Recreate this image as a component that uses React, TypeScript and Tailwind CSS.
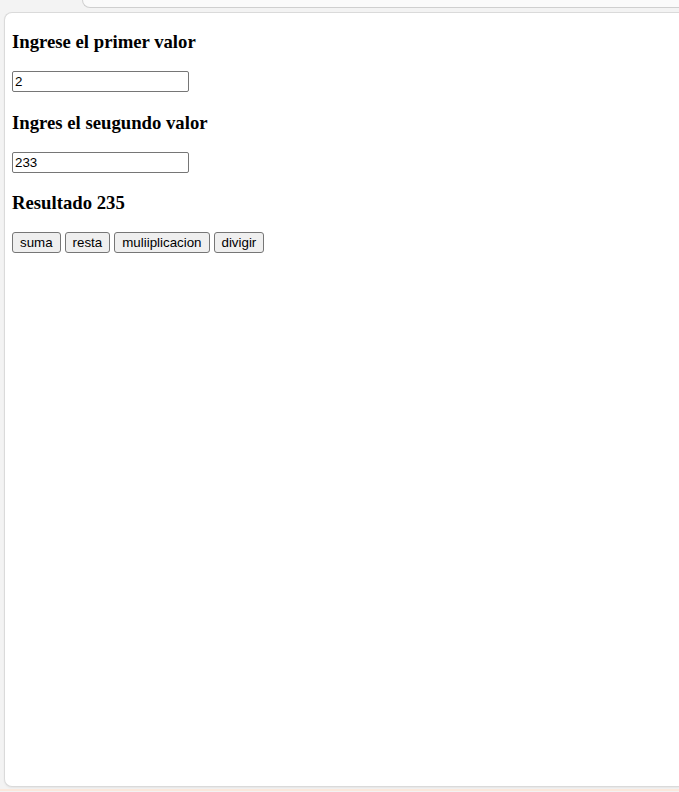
export default function App() {
    return (
        <div className="w-[679px] h-[792px] bg-[#f3f3f3] overflow-hidden flex flex-col">
            <div className="h-[8px] ml-[82px] bg-[#fafafa] border-b border-l border-[#cfcfcf] rounded-bl-[14px] shrink-0" />
            <div className="h-[4px] shrink-0" />
            <div className="ml-[4px] h-[775px] shrink-0 bg-white border border-r-0 border-[#dadada] rounded-l-[8px] shadow-[0_1px_2px_rgba(0,0,0,0.06)] font-['Liberation_Serif',serif] text-black">
                <div className="px-[7px]">
                    <h3 className="text-[18.72px] leading-[21.5px] font-bold mt-[18px] mb-[18.72px]">Ingrese el primer valor</h3>
                    <div className="h-[21.6px]">
                        <input
                            type="text"
                            defaultValue="2"
                            className="block w-[177px] h-[21px] border border-[#767676] rounded-[2px] px-[2px] text-[13.33px] font-['Liberation_Sans',Arial,sans-serif] bg-white outline-none"
                        />
                    </div>
                    <h3 className="text-[18.72px] leading-[21.5px] font-bold my-[18.72px]">Ingres el seugundo valor</h3>
                    <div className="h-[21.3px]">
                        <input
                            type="text"
                            defaultValue="233"
                            className="block w-[177px] h-[21px] border border-[#767676] rounded-[2px] px-[2px] text-[13.33px] font-['Liberation_Sans',Arial,sans-serif] bg-white outline-none"
                        />
                    </div>
                    <h3 className="text-[18.72px] leading-[21.5px] font-bold my-[18.72px]">Resultado 235</h3>
                    <div className="flex gap-[4px] font-['Liberation_Sans',Arial,sans-serif] text-[13.33px]">
                        <button className="h-[21px] px-[7px] bg-[#efefef] border border-[#767676] rounded-[3px] leading-none">suma</button>
                        <button className="h-[21px] px-[7px] bg-[#efefef] border border-[#767676] rounded-[3px] leading-none">resta</button>
                        <button className="h-[21px] px-[7px] bg-[#efefef] border border-[#767676] rounded-[3px] leading-none">muliiplicacion</button>
                        <button className="h-[21px] px-[7px] bg-[#efefef] border border-[#767676] rounded-[3px] leading-none">divigir</button>
                    </div>
                </div>
            </div>
            <div className="h-[2px] shrink-0" />
            <div className="h-[2px] bg-[#fbe8dc] shrink-0" />
        </div>
    )
}
